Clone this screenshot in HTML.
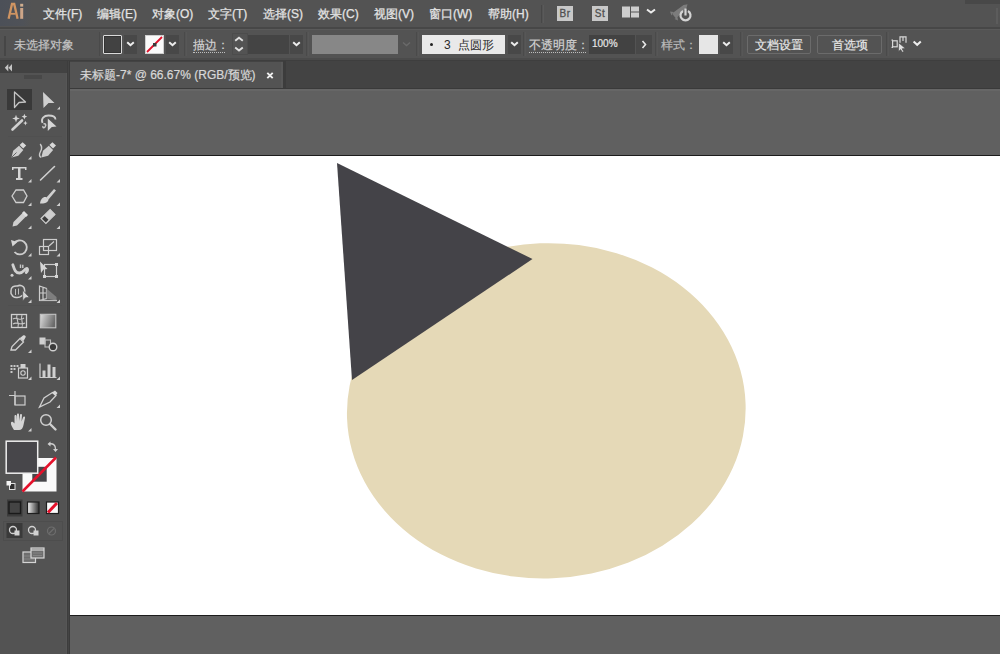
<!DOCTYPE html>
<html><head><meta charset="utf-8">
<style>
*{margin:0;padding:0;box-sizing:border-box}
html,body{width:1000px;height:654px;overflow:hidden;background:#535353;font-family:"Liberation Sans",sans-serif;}
.abs,.mi,.ct{position:absolute}
.mi{top:6.5px;font-size:12px;color:#e4e4e4;line-height:14px;white-space:nowrap;-webkit-text-stroke:0.25px #e4e4e4}
.ct{font-size:12px;color:#d2d2d2;line-height:14px;white-space:nowrap;-webkit-text-stroke:0.2px currentColor}
.vs{position:absolute;top:32px;width:3px;height:24px;border-left:1px solid #4a4a4a;border-right:1px solid #575757}
.chev{position:absolute;width:13px;height:19px;top:35px;background:#484848}
.chev svg{position:absolute;left:2px;top:6px}
.btn{position:absolute;top:35px;height:19px;border:1px solid #6b6b6b;border-radius:2px;font-size:12px;color:#e6e6e6;line-height:17px;padding-top:1px;text-align:center;-webkit-text-stroke:0.2px currentColor}
.ul{border-bottom:1px dotted #bdbdbd}
</style></head><body>
<!-- bars -->
<div class="abs" style="left:965px;top:0;width:35px;height:4px;background:#484848"></div>
<div class="abs" style="left:996px;top:8px;width:2px;height:16px;background:#5c5c5c"></div>
<div class="abs" style="left:0;top:27px;width:1000px;height:2px;background:#474747"></div>
<div class="abs" style="left:0;top:29px;width:1000px;height:1px;background:#5a5a5a"></div>
<div class="abs" style="left:0;top:58px;width:1000px;height:2px;background:#4b4b4b"></div>
<div class="abs" style="left:0;top:60px;width:1000px;height:1px;background:#3e3e3e"></div>
<!-- tab row -->
<div class="abs" style="left:70px;top:61px;width:930px;height:27px;background:#434343"></div>
<div class="abs" style="left:70px;top:62px;width:211px;height:26px;background:#535353"></div>
<div class="abs" style="left:281px;top:62px;width:2px;height:26px;background:#585858"></div>
<div class="abs" style="left:283px;top:61px;width:3px;height:27px;background:#3c3c3c"></div>
<!-- canvas -->
<div class="abs" style="left:70px;top:88px;width:930px;height:566px;background:#606060"></div>
<div class="abs" style="left:70px;top:88px;width:930px;height:1px;background:#3a3a3a"></div>
<div class="abs" style="left:70px;top:89px;width:930px;height:2px;background:#666"></div>
<div class="abs" style="left:70px;top:155px;width:930px;height:461px;background:#fff;border-top:1px solid #1c1c1c;border-bottom:1px solid #1c1c1c"></div>
<!-- tools panel -->
<div class="abs" style="left:0;top:61px;width:67px;height:12px;background:#424242"></div>
<div class="abs" style="left:24px;top:75px;width:18px;height:4px;background:#484848"></div>
<div class="abs" style="left:66px;top:73px;width:1px;height:581px;background:#575757"></div>
<div class="abs" style="left:67px;top:61px;width:1px;height:593px;background:#3d3d3d"></div>
<div class="abs" style="left:68px;top:61px;width:1px;height:593px;background:#444"></div>
<div class="abs" style="left:69px;top:61px;width:1px;height:593px;background:#3b3b3b"></div>

<!-- tools icons -->
<svg class="abs" style="left:0;top:0" width="67" height="654">
<defs>
<linearGradient id="gr1" x1="0" y1="0" x2="1" y2="0.3"><stop offset="0" stop-color="#dcdcdc"/><stop offset="1" stop-color="#6a6a6a"/></linearGradient>
<linearGradient id="gr2" x1="0" y1="0" x2="1" y2="0"><stop offset="0" stop-color="#f4f4f4"/><stop offset="1" stop-color="#2a2a2a"/></linearGradient>
</defs>
<!-- panel header arrows -->
<path d="M8.3 64 L4.8 67.8 L8.3 71.5 Z M12 64 L8.5 67.8 L12 71.5 Z" fill="#c4c4c4"/>
<!-- selection highlight -->
<rect x="7" y="89" width="25" height="21" fill="#393939"/>
<g stroke="#c4c4c4" stroke-width="1.3" fill="none" stroke-linejoin="round">
<path d="M14.5 92 L25.5 102 L19 102.5 L14.5 107.5 Z"/>
</g>
<g fill="#cfcfcf">
<!-- direct selection -->
<path d="M43 92 L54.5 103 L48.5 103 L43.5 108 Z"/>
<!-- corner marks -->
<path d="M60 106.5 L60 109.5 L57 109.5 Z"/>
<path d="M31.5 156 L31.5 159.5 L28 159.5 Z"/>
<path d="M31.5 179 L31.5 182.5 L28 182.5 Z"/>
<path d="M60 179 L60 182.5 L56.5 182.5 Z"/>
<path d="M31.5 202.5 L31.5 206 L28 206 Z"/>
<path d="M60 202.5 L60 206 L56.5 206 Z"/>
<path d="M31.5 225.5 L31.5 229 L28 229 Z"/>
<path d="M60 225.5 L60 229 L56.5 229 Z"/>
<path d="M31.5 253 L31.5 256.5 L28 256.5 Z"/>
<path d="M60 253 L60 256.5 L56.5 256.5 Z"/>
<path d="M31.5 276 L31.5 279.5 L28 279.5 Z"/>
<path d="M31.5 299.5 L31.5 303 L28 303 Z"/>
<path d="M60 299.5 L60 303 L56.5 303 Z"/>
<path d="M31.5 349.5 L31.5 353 L28 353 Z"/>
<path d="M31.5 376.5 L31.5 380 L28 380 Z"/>
<path d="M60 376.5 L60 380 L56.5 380 Z"/>
<path d="M60 404.5 L60 408 L56.5 408 Z"/>
<path d="M31.5 428 L31.5 431.5 L28 431.5 Z"/>
</g>
<!-- magic wand -->
<path d="M12.5 129.5 L22 120.5" stroke="#d0d0d0" stroke-width="2.6" stroke-linecap="round"/>
<g fill="#d4d4d4">
<path d="M16 114.8 L17 117.6 L19.8 118.6 L17 119.6 L16 122.4 L15 119.6 L12.2 118.6 L15 117.6 Z"/>
<path d="M24.4 113.8 L25.2 115.8 L27.2 116.6 L25.2 117.4 L24.4 119.4 L23.6 117.4 L21.6 116.6 L23.6 115.8 Z"/>
<path d="M25.4 120.8 L26.1 122.4 L27.7 123.1 L26.1 123.8 L25.4 125.4 L24.7 123.8 L23.1 123.1 L24.7 122.4 Z"/>
</g>
<!-- lasso -->
<path d="M42.5 123 C40.5 118.5 44 115.5 48.5 115.5 C52.5 115.5 55.5 117 55.5 119.5" fill="none" stroke="#cfcfcf" stroke-width="1.8"/>
<path d="M43.5 124 C45.5 123 46.5 125 45 127 C43.5 128.5 42.5 127.5 43 126" fill="none" stroke="#c8c8c8" stroke-width="1.5"/>
<path d="M47.8 118.5 L56.5 126.5 L51.8 127 L47.8 131 Z" fill="#d6d6d6"/>
<rect x="8" y="136" width="54" height="1" fill="#505050"/>
<!-- pen -->
<path d="M11.5 157.5 L13.2 150.8 L19 145.8 L23.3 150 L18.3 155.8 Z" fill="#cdcdcd"/>
<path d="M19.6 145 L22.6 142.2 L26.2 145.6 L23.2 148.6 Z" fill="#d8d8d8"/>
<path d="M11.8 157.2 L16.5 152.5" stroke="#5a5a5a" stroke-width="0.9"/>
<!-- curvature pen -->
<path d="M41.3 157.5 L43 150.8 L48.8 145.8 L53.1 150 L48.1 155.8 Z" fill="#cdcdcd"/>
<path d="M49.4 145 L52.4 142.2 L56 145.6 L53 148.6 Z" fill="#d8d8d8"/>
<path d="M40.2 144 C42.5 147 41.8 149.5 40.3 152 C39 154.5 39.6 156.5 41 157.5" stroke="#cacaca" stroke-width="1.4" fill="none"/>
<!-- type -->
<path d="M12 167 H26.5 V170 H25 V168.5 H20.5 V178 H22.5 V180 H16 V178 H18 V168.5 H13.5 V170 H12 Z" fill="#d6d6d6"/>
<!-- line -->
<path d="M40.5 180 L54.5 166.5" stroke="#cfcfcf" stroke-width="1.6" stroke-linecap="round"/>
<!-- polygon -->
<path d="M12 196 L16 190 L23.5 190 L27 196 L23.5 202.5 L16 202.5 Z" fill="#5c5c5c" stroke="#d0d0d0" stroke-width="1.3"/>
<!-- paintbrush -->
<path d="M46 198 L54 189 L56 190.5 L48.5 199.5 Z" fill="#d0d0d0"/>
<path d="M40 203.5 C40.5 199 43 196.5 46 197 L48.5 199.5 C48 202.5 44.5 204 40 203.5 Z" fill="#d4d4d4"/>
<!-- pencil -->
<path d="M12.5 226.5 L13.5 222 L23 212.5 L26.5 216 L17 225.5 Z" fill="#cfcfcf"/>
<path d="M22 213 L24 211 L28 215 L26 217 Z" fill="#e0e0e0"/>
<!-- eraser -->
<g transform="rotate(45 48 216.5)">
<rect x="44.5" y="210" width="7" height="13" fill="#cfcfcf" stroke="#cfcfcf" stroke-width="1"/>
<rect x="45.3" y="218.5" width="5.4" height="3.8" fill="#3c3c3c"/>
</g>
<!-- rotate -->
<path d="M14 243.5 A7 7 0 1 1 14.5 252" fill="none" stroke="#cdcdcd" stroke-width="1.8"/>
<path d="M11 240 L17.5 242 L12.5 246.5 Z" fill="#d4d4d4"/>
<!-- scale -->
<g fill="none" stroke="#cdcdcd" stroke-width="1.2">
<rect x="43.5" y="239.5" width="13" height="11"/>
<rect x="39.5" y="246.5" width="9" height="8"/>
<path d="M49 246 L54 241.5"/>
</g>
<!-- width tool -->
<path d="M12.8 264.8 C14.5 270 15.5 273 19.5 273 C23.5 273 24 269.5 26.5 268.5 C28 268 28 271.5 26.2 272.5" fill="none" stroke="#d0d0d0" stroke-width="2.8" stroke-linecap="round"/>
<path d="M20.5 264.5 V268 M22.8 264.8 V268" stroke="#c8c8c8" stroke-width="1.4"/>
<circle cx="12" cy="275.3" r="1.5" fill="#cfcfcf"/>
<!-- free transform -->
<g fill="none" stroke="#cdcdcd" stroke-width="1.2">
<rect x="44.5" y="264.5" width="12" height="12"/>
</g>
<path d="M40 261.5 L47.5 269 L43.5 269.5 L41 273 Z" fill="#d6d6d6"/>
<g fill="#d6d6d6"><rect x="43" y="275" width="3" height="3"/><rect x="55" y="263" width="3" height="3"/><rect x="55" y="275" width="3" height="3"/></g>
<!-- shape builder -->
<path d="M11 291 C10.5 287 14 285.5 17.5 286 C20 284.5 24.5 286 24.5 289.5 C25.5 292 24 295 21.5 296 C19 298.5 13 298 12 295 C10.5 294 10.8 292.5 11 291 Z" fill="none" stroke="#cdcdcd" stroke-width="1.5"/>
<path d="M15.5 289 V295 M18.5 288.5 V294.5" stroke="#bdbdbd" stroke-width="1"/>
<path d="M22.5 290 L29.5 297.5 L25.5 297.8 L22.8 301 Z" fill="#d6d6d6" stroke="#535353" stroke-width="0.8"/>
<!-- perspective grid -->
<g fill="none" stroke="#cdcdcd" stroke-width="1.2">
<path d="M39.5 286 L46.5 288.5 L46.5 298.5 L39.5 300.5 Z M43 287.5 V299.5 M39.5 293 H46.5"/>
</g>
<path d="M46.5 288.5 L56.5 297 L56.5 300.5 L46.5 298.5 Z" fill="#7e7e7e"/>
<path d="M40 300.5 H57" stroke="#bdbdbd" stroke-width="1.2"/>
<rect x="8" y="305" width="54" height="1" fill="#505050"/>
<!-- mesh -->
<rect x="11.5" y="314.5" width="15" height="13" fill="none" stroke="#d0d0d0" stroke-width="1.3"/>
<path d="M13 319 C17 316 19 322 24 318 M13 324 C17 321 20 326 25 323 M17 315 C15 319 20 322 18 327 M22 315 C20 319 24 323 22 327" stroke="#c8c8c8" stroke-width="1.1" fill="none"/>
<!-- gradient -->
<rect x="40.3" y="314.3" width="15.5" height="13.5" fill="url(#gr1)" stroke="#c4c4c4" stroke-width="1.1"/>
<!-- eyedropper -->
<path d="M11 350 L12 346.5 L20 338.5 L23.5 342 L15.5 350 Z" fill="none" stroke="#cfcfcf" stroke-width="1.3"/>
<path d="M20 338 L23 335.5 C24.5 334.5 26.5 336 25.5 337.5 L23.5 341 Z" fill="#d6d6d6"/>
<!-- blend -->
<rect x="39.5" y="337.5" width="6" height="7" fill="#d0d0d0"/>
<rect x="45" y="340" width="5.5" height="7" fill="none" stroke="#bdbdbd" stroke-width="1.1"/>
<circle cx="53" cy="347" r="3.8" fill="#3a3a3a" stroke="#d0d0d0" stroke-width="1.4"/>
<!-- symbol sprayer -->
<g fill="#c8c8c8"><rect x="10.5" y="365" width="2" height="2"/><rect x="13.5" y="365" width="2" height="2"/><rect x="16.5" y="365" width="2" height="2"/><rect x="10.5" y="368" width="2" height="2"/><rect x="13.5" y="368" width="2" height="2"/><rect x="10.5" y="371" width="2" height="2"/></g>
<rect x="18.5" y="368" width="9" height="10" fill="none" stroke="#d0d0d0" stroke-width="1.2"/>
<rect x="20.5" y="364" width="5" height="4" fill="#d0d0d0"/>
<circle cx="23" cy="373" r="2.2" fill="none" stroke="#d0d0d0" stroke-width="1.1"/>
<!-- column graph -->
<path d="M40 363.5 V377.5 H56.5" fill="none" stroke="#cdcdcd" stroke-width="1.2"/>
<g fill="#d0d0d0"><rect x="42.5" y="370.5" width="3" height="7"/><rect x="47.5" y="364.5" width="3" height="13"/><rect x="52.5" y="367" width="3" height="10.5"/></g>
<!-- artboard tool -->
<rect x="15" y="396" width="10" height="9" fill="#5c5c5c" stroke="#cdcdcd" stroke-width="1.2"/>
<path d="M9 395.5 H15 M15 391 V405" stroke="#cdcdcd" stroke-width="1.2"/>
<!-- slice -->
<path d="M39.5 407 L44 398 L52.5 392.5 L56 395.5 L50 402 Z" fill="none" stroke="#cfcfcf" stroke-width="1.3"/>
<path d="M52 392.5 L55 390.5 L57.5 393 L55.5 396 Z" fill="#d6d6d6"/>
<!-- hand -->
<path d="M14 430 C12 427 10.5 424 11 422.5 C11.5 421 13 421.5 14.5 423.5 L14.5 416 C14.5 414.5 16.5 414.5 16.5 416 L16.5 421 L17 414.5 C17 413 19 413 19 414.5 L19 421 L20 415 C20 413.5 22 413.5 22 415 L21.5 421.5 L23 417.5 C23.5 416 25.5 416.5 25 418 L23.5 425 C23 428 21.5 430 19 430 Z" fill="#d4d4d4"/>
<!-- zoom -->
<circle cx="46" cy="420" r="5.3" fill="none" stroke="#cfcfcf" stroke-width="1.5"/>
<path d="M50 424 L55.5 429.5" stroke="#cfcfcf" stroke-width="2.4" stroke-linecap="round"/>
<!-- fill/stroke -->
<rect x="22.5" y="458" width="34" height="33.5" fill="#fafafa"/>
<rect x="32.3" y="466.8" width="14.4" height="14.9" fill="#47464a"/>
<path d="M22.5 491.5 L56 457.5" stroke="#e5112b" stroke-width="2.5"/>
<rect x="6.2" y="441.2" width="31.5" height="32" fill="#47464a" stroke="#eeeeee" stroke-width="1.5"/>
<path d="M49 444 C53 443 55.5 445 55.5 449" fill="none" stroke="#cfcfcf" stroke-width="1.3"/>
<path d="M47.5 444 L50.5 441.5 L50.5 446.5 Z M53 449 L58 449 L55.5 452 Z" fill="#cfcfcf"/>
<rect x="9.5" y="483.5" width="5.5" height="6" fill="#2e2e2e" stroke="#e0e0e0" stroke-width="1"/>
<rect x="6.5" y="481" width="4.5" height="4.5" fill="#f4f4f4"/>
<!-- modes -->
<rect x="7" y="499.5" width="15.5" height="17" fill="#3c3c3c"/>
<rect x="9" y="502" width="11.5" height="11.5" fill="#444" stroke="#1a1a1a" stroke-width="1.4"/>
<rect x="27.5" y="502" width="11.5" height="11.5" fill="url(#gr2)" stroke="#1e1e1e" stroke-width="1.2"/>
<rect x="46.5" y="502" width="12" height="11.5" fill="#fafafa" stroke="#1e1e1e" stroke-width="1.2"/>
<path d="M48 512.5 L57 503" stroke="#e5112b" stroke-width="3"/>
<rect x="6.5" y="523" width="16" height="15" fill="#3a3a3a"/>
<g fill="none" stroke="#d2d2d2" stroke-width="1.3">
<circle cx="13" cy="530" r="3.5"/>
<circle cx="32" cy="530" r="3.5"/>
</g>
<rect x="14.5" y="530.5" width="5" height="5" fill="#d2d2d2"/>
<rect x="33.5" y="530.5" width="5" height="5" fill="#d2d2d2"/>
<circle cx="51.5" cy="531" r="4" fill="none" stroke="#6e6e6e" stroke-width="1.2"/>
<path d="M49 533.5 L54 528.5" stroke="#6e6e6e" stroke-width="1.2"/>
<!-- screen mode -->
<rect x="23" y="552" width="12.5" height="10.5" fill="#6e6e6e" stroke="#d4d4d4" stroke-width="1.2"/>
<path d="M24 556 H34 M24 559 H34" stroke="#8a8a8a" stroke-width="0.8"/>
<rect x="31" y="548" width="13" height="10" fill="#6e6e6e" stroke="#d8d8d8" stroke-width="1.2"/>
<path d="M31 550 H44" stroke="#d8d8d8" stroke-width="1.2"/>
<path d="M33 553 H42 M33 555.5 H42" stroke="#8a8a8a" stroke-width="0.8"/>
<rect x="3.5" y="521.5" width="59" height="19" fill="none" stroke="#4d4d4d" stroke-width="1"/>
</svg>

<!-- menu -->
<div class="abs" style="left:0;top:0;width:32px;height:26px;background:linear-gradient(90deg,#4c5058 0%,#4f5258 70%,#535353 100%)"></div>
<svg class="abs" style="left:0;top:0" width="30" height="25"><path d="M8.6 18.8 L12 4 L14.2 4 L17.6 18.8" fill="none" stroke="#cf9462" stroke-width="2.3"/><path d="M10.5 13.8 H15.6" stroke="#cf9462" stroke-width="1.8"/><rect x="20.2" y="3.8" width="3" height="2.8" fill="#cfae90"/><rect x="20.2" y="8" width="3" height="10.8" fill="#cda588"/></svg>
<div class="mi" style="left:43px">文件(F)</div>
<div class="mi" style="left:97px">编辑(E)</div>
<div class="mi" style="left:152px">对象(O)</div>
<div class="mi" style="left:208px">文字(T)</div>
<div class="mi" style="left:263px">选择(S)</div>
<div class="mi" style="left:318px">效果(C)</div>
<div class="mi" style="left:374px">视图(V)</div>
<div class="mi" style="left:429px">窗口(W)</div>
<div class="mi" style="left:488px">帮助(H)</div>
<div class="abs" style="left:541px;top:5px;width:1px;height:18px;background:#474747"></div>
<div class="abs" style="left:543px;top:5px;width:1px;height:18px;background:#5a5a5a"></div>
<div class="abs" style="left:557px;top:6px;width:16px;height:15px;background:#c8c8c8;font-size:10px;color:#505050;line-height:15px;text-align:center;letter-spacing:0.5px;-webkit-text-stroke:0.3px #505050">Br</div>
<div class="abs" style="left:592px;top:6px;width:16px;height:15px;background:#c8c8c8;font-size:10px;color:#505050;line-height:15px;text-align:center;letter-spacing:0.5px;-webkit-text-stroke:0.3px #505050">St</div>
<svg class="abs" style="left:615px;top:0" width="85" height="28"><g fill="#cdcdcd"><rect x="7" y="6.5" width="8" height="11"/><rect x="16" y="6.5" width="8" height="5"/><rect x="16" y="12.5" width="8" height="5"/></g><path d="M32 9.5 L36 12.5 L40 9.5" stroke="#ececec" stroke-width="2" fill="none"/><path d="M57 13.5 L68.5 5 L72.5 4.2 L71.5 8 L61 18.5 Z M58.5 12 L55 11.5 L56.5 15.5 Z M62.5 17 L63 20.5 L59.5 19 Z" fill="#7c7c7c"/><path d="M68 11 A5 5 0 1 0 73 11" stroke="#d4d4d4" stroke-width="2.2" fill="none"/><path d="M70.5 8.5 V15.5" stroke="#d4d4d4" stroke-width="2.2"/></svg>

<!-- control bar -->
<div class="abs" style="left:4px;top:36px;width:2px;height:20px;background:#464646"></div>
<div class="ct" style="left:14px;top:38px;color:#c4c4c4">未选择对象</div>
<div class="vs" style="left:99px"></div>
<!-- fill swatch -->
<div class="abs" style="left:103px;top:35px;width:19px;height:19px;border:1.5px solid #dadada;border-radius:1px;background:#424242;box-shadow:inset 0 0 0 1px #333"></div>
<div class="chev" style="left:124px"><svg width="9" height="6"><path d="M1.2 1.2 L4.5 4.2 L7.8 1.2" stroke="#ededed" stroke-width="2" fill="none"/></svg></div>
<!-- stroke swatch -->
<div class="abs" style="left:145px;top:35px;width:19px;height:19px;background:#fafafa;border:1px solid #cfcfcf"></div>
<svg class="abs" style="left:145px;top:35px" width="19" height="19"><path d="M2 17 L17 2" stroke="#e0112b" stroke-width="1.8"/><rect x="8" y="8" width="3.5" height="3.5" fill="#3a3a3a"/></svg>
<div class="chev" style="left:166px"><svg width="9" height="6"><path d="M1.2 1.2 L4.5 4.2 L7.8 1.2" stroke="#ededed" stroke-width="2" fill="none"/></svg></div>
<div class="vs" style="left:184px"></div>
<!-- stroke -->
<div class="ct ul" style="left:193px;top:38px;line-height:14px;width:32px;overflow:hidden;height:15px">描边：</div>
<div class="abs" style="left:232px;top:33px;width:16px;height:22px;border:1px solid #4c4c4c"></div><svg class="abs" style="left:232px;top:35px" width="14" height="19"><path d="M3.2 5.8 L7 2.8 L10.8 5.8 M3.2 12.5 L7 15.5 L10.8 12.5" stroke="#e0e0e0" stroke-width="1.9" fill="none"/></svg>
<div class="abs" style="left:248px;top:35px;width:41px;height:19px;background:#444444"></div>
<div class="chev" style="left:290px"><svg width="9" height="6"><path d="M1.2 1.2 L4.5 4.2 L7.8 1.2" stroke="#ededed" stroke-width="2" fill="none"/></svg></div>
<div class="vs" style="left:306px"></div>
<div class="abs" style="left:312px;top:35px;width:86px;height:19px;background:#878787"></div>
<svg class="abs" style="left:402px;top:41px" width="9" height="6"><path d="M1 1.5 L4.5 4.5 L8 1.5" stroke="#6a6a6a" stroke-width="1.4" fill="none"/></svg>
<div class="vs" style="left:416px"></div>
<!-- brush -->
<div class="abs" style="left:422px;top:35px;width:83px;height:19px;background:#e9e9e9"></div>
<div class="abs" style="left:430px;top:43px;width:3px;height:3px;border-radius:50%;background:#222"></div>
<div class="ct" style="left:444px;top:38px;color:#2a2a2a;-webkit-text-stroke:0">3</div>
<div class="ct" style="left:458px;top:38px;color:#2a2a2a;-webkit-text-stroke:0">点圆形</div>
<div class="chev" style="left:508px"><svg width="9" height="6"><path d="M1.2 1.2 L4.5 4.2 L7.8 1.2" stroke="#ededed" stroke-width="2" fill="none"/></svg></div>
<div class="vs" style="left:523px"></div>
<!-- opacity -->
<div class="ct ul" style="left:528.5px;top:38px;line-height:14px;width:57px;overflow:hidden;height:15px">不透明度：</div>
<div class="abs" style="left:589px;top:35px;width:46px;height:19px;background:#424242"></div>
<div class="ct" style="left:592px;top:37px;color:#e6e6e6;font-size:10px">100%</div>
<div class="abs" style="left:636px;top:35px;width:16px;height:19px;background:#484848"></div>
<svg class="abs" style="left:641px;top:40px" width="6" height="9"><path d="M1.5 1 L4.5 4.5 L1.5 8" stroke="#e8e8e8" stroke-width="1.6" fill="none"/></svg>
<div class="vs" style="left:655px"></div>
<!-- style -->
<div class="ct" style="left:661px;top:38px;color:#bababa">样式：</div>
<div class="abs" style="left:699px;top:35px;width:19px;height:19px;background:#e6e6e6"></div>
<div class="chev" style="left:720px"><svg width="9" height="6"><path d="M1.2 1.2 L4.5 4.2 L7.8 1.2" stroke="#ededed" stroke-width="2" fill="none"/></svg></div>
<div class="vs" style="left:740px"></div>
<div class="btn" style="left:747px;width:64px">文档设置</div>
<div class="btn" style="left:817px;width:65px">首选项</div>
<div class="vs" style="left:886px"></div>
<svg class="abs" style="left:885px;top:30px" width="45" height="28"><g fill="none" stroke="#d8d8d8" stroke-width="1.2"><rect x="7.6" y="10.8" width="4.6" height="6"/><path d="M6.5 10.2 H8 M6.5 17.4 H8 M15 6.2 V12.8 M21 6.2 V12.8 M15 6.8 H21 M18 6.8 V11"/></g><path d="M13.6 12.8 L13.6 21.5 L15.6 19.6 L17.4 22.3 L18.8 21.5 L17.1 18.8 L20.4 18.4 Z" fill="#e0e0e0" stroke="#4a4a4a" stroke-width="0.6"/><path d="M28.6 11.4 L32.2 14.8 L35.8 11.4" stroke="#ededed" stroke-width="2" fill="none"/></svg>

<!-- tab text -->
<div class="ct" style="left:80px;top:68px;color:#d8d8d8">未标题-7* @ 66.67% (RGB/预览)</div>
<svg class="abs" style="left:265px;top:71px" width="10" height="10"><path d="M2.3 1.8 L7.7 7.2 M7.7 1.8 L2.3 7.2" stroke="#f0f0f0" stroke-width="1.9"/></svg>

<!-- artwork -->
<svg class="abs" style="left:0;top:0" width="1000" height="654">
<ellipse cx="546.3" cy="410.8" rx="199.4" ry="167.6" transform="rotate(-2.2 546.3 410.8)" fill="#e5d9b7"/>
<polygon points="337,163 532.5,259 352,380" fill="#444348"/>
</svg>
</body></html>
